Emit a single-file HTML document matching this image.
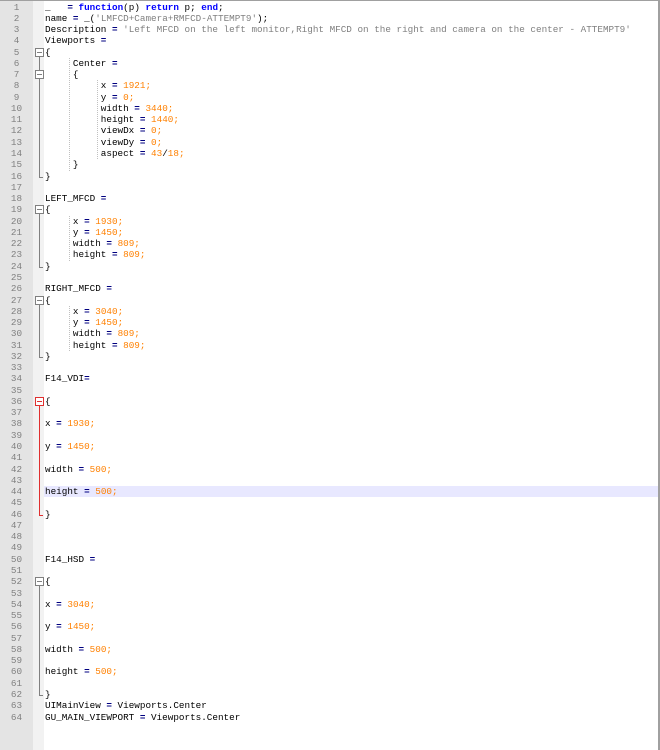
<!DOCTYPE html>
<html><head><meta charset="utf-8"><style>
body{margin:0;width:660px;height:750px;overflow:hidden;background:#fff;position:relative;font-family:"Liberation Mono",monospace;}
#top{position:absolute;left:0;top:0;width:660px;height:1px;background:#a0a0a0}
#gut{position:absolute;left:0;top:1px;width:33px;height:749px;background:#e4e4e4}
#fold{position:absolute;left:33px;top:1px;width:11px;height:749px;background:#f2f2f2}
#rb{position:absolute;right:0;top:0;width:2px;height:750px;background:#a0a0a0}
.ln{position:absolute;left:0;width:33px;text-align:center;font-size:9.3px;color:#808080;line-height:11.27px}
.t{position:absolute;left:45px;font-size:9.3px;line-height:11.27px;color:#000;white-space:pre}
.k{color:#0000ff;font-weight:bold}
.o{color:#000080;font-weight:bold}
.n{color:#ff8000}
.s{color:#808080}
.hl{position:absolute;left:44px;width:614px;height:11.27px;background:#e8e8ff}
.box{position:absolute;left:35px;width:7px;height:7px;border:1px solid #808080;background:#fff;box-sizing:content-box}
.box::after{content:"";position:absolute;left:1px;top:3px;width:5px;height:1px;background:#808080}
.vl{position:absolute;left:39px;width:1px;background:#808080}
.end{position:absolute;left:39px;width:4px;height:1px;background:#808080}
.box.red{border-color:#e03030}
.box.red::after{background:#e03030}
.vl.red,.end.red{background:#e03030}
.g{position:absolute;width:0;border-left:1px dotted #c0c0c0}
</style></head><body>
<div id="gut"></div><div id="fold"></div><div id="top"></div><div id="rb"></div>
<div class="hl" style="top:486.1px"></div>
<div id="c"></div>
<script>
var L=[
'_   <o>=</o> <k>function</k>(p) <k>return</k> p; <k>end</k>;',
'name <o>=</o> _(<s>\'LMFCD+Camera+RMFCD-ATTEMPT9\'</s>);',
'Description <o>=</o> <s>\'Left MFCD on the left monitor,Right MFCD on the right and camera on the center - ATTEMPT9\'</s>',
'Viewports <o>=</o>',
'{',
'     Center <o>=</o>',
'     {',
'          x <o>=</o> <n>1921;</n>',
'          y <o>=</o> <n>0;</n>',
'          width <o>=</o> <n>3440;</n>',
'          height <o>=</o> <n>1440;</n>',
'          viewDx <o>=</o> <n>0;</n>',
'          viewDy <o>=</o> <n>0;</n>',
'          aspect <o>=</o> <n>43</n>/<n>18;</n>',
'     }',
'}','',
'LEFT_MFCD <o>=</o>',
'{',
'     x <o>=</o> <n>1930;</n>',
'     y <o>=</o> <n>1450;</n>',
'     width <o>=</o> <n>809;</n>',
'     height <o>=</o> <n>809;</n>',
'}','',
'RIGHT_MFCD <o>=</o>',
'{',
'     x <o>=</o> <n>3040;</n>',
'     y <o>=</o> <n>1450;</n>',
'     width <o>=</o> <n>809;</n>',
'     height <o>=</o> <n>809;</n>',
'}','',
'F14_VDI<o>=</o>','',
'{','',
'x <o>=</o> <n>1930;</n>','',
'y <o>=</o> <n>1450;</n>','',
'width <o>=</o> <n>500;</n>','',
'height <o>=</o> <n>500;</n>','',
'}','','','',
'F14_HSD <o>=</o>','',
'{','',
'x <o>=</o> <n>3040;</n>','',
'y <o>=</o> <n>1450;</n>','',
'width <o>=</o> <n>500;</n>','',
'height <o>=</o> <n>500;</n>','',
'}',
'UIMainView <o>=</o> Viewports.Center',
'GU_MAIN_VIEWPORT <o>=</o> Viewports.Center'];
var h='',LH=11.27,T=1.5;
function y(i){return (T+(i-1)*LH).toFixed(2);}
for(var i=1;i<=64;i++){
 var s=L[i-1]||'';
 s=s.replace(/<(k|o|n|s)>/g,'<span class="$1">').replace(/<\/(k|o|n|s)>/g,'</span>');
 h+='<div class="ln" style="top:'+y(i)+'px">'+i+'</div><div class="t" style="top:'+y(i)+'px">'+s+'</div>';
}
function blk(a,b,red){var c=red?' red':'';
 h+='<div class="vl'+c+'" style="top:'+(T+(a-1)*LH+9)+'px;height:'+((b-a)*LH-3)+'px"></div>';
 h+='<div class="end'+c+'" style="top:'+(T+(b-1)*LH+6)+'px"></div>';
 h+='<div class="box'+c+'" style="top:'+(T+(a-1)*LH+1)+'px"></div>';}
blk(5,16);blk(19,24);blk(27,32);blk(36,46,true);blk(52,62);
h+='<div class="box" style="top:'+(T+6*LH+1)+'px"></div>';
function g(x,a,b){h+='<div class="g" style="left:'+x+'px;top:'+(T+(a-1)*LH)+'px;height:'+((b-a+1)*LH)+'px"></div>';}
g(69,6,15);g(97,8,14);g(69,20,23);g(69,28,31);
document.getElementById('c').innerHTML=h;
</script>
</body></html>
